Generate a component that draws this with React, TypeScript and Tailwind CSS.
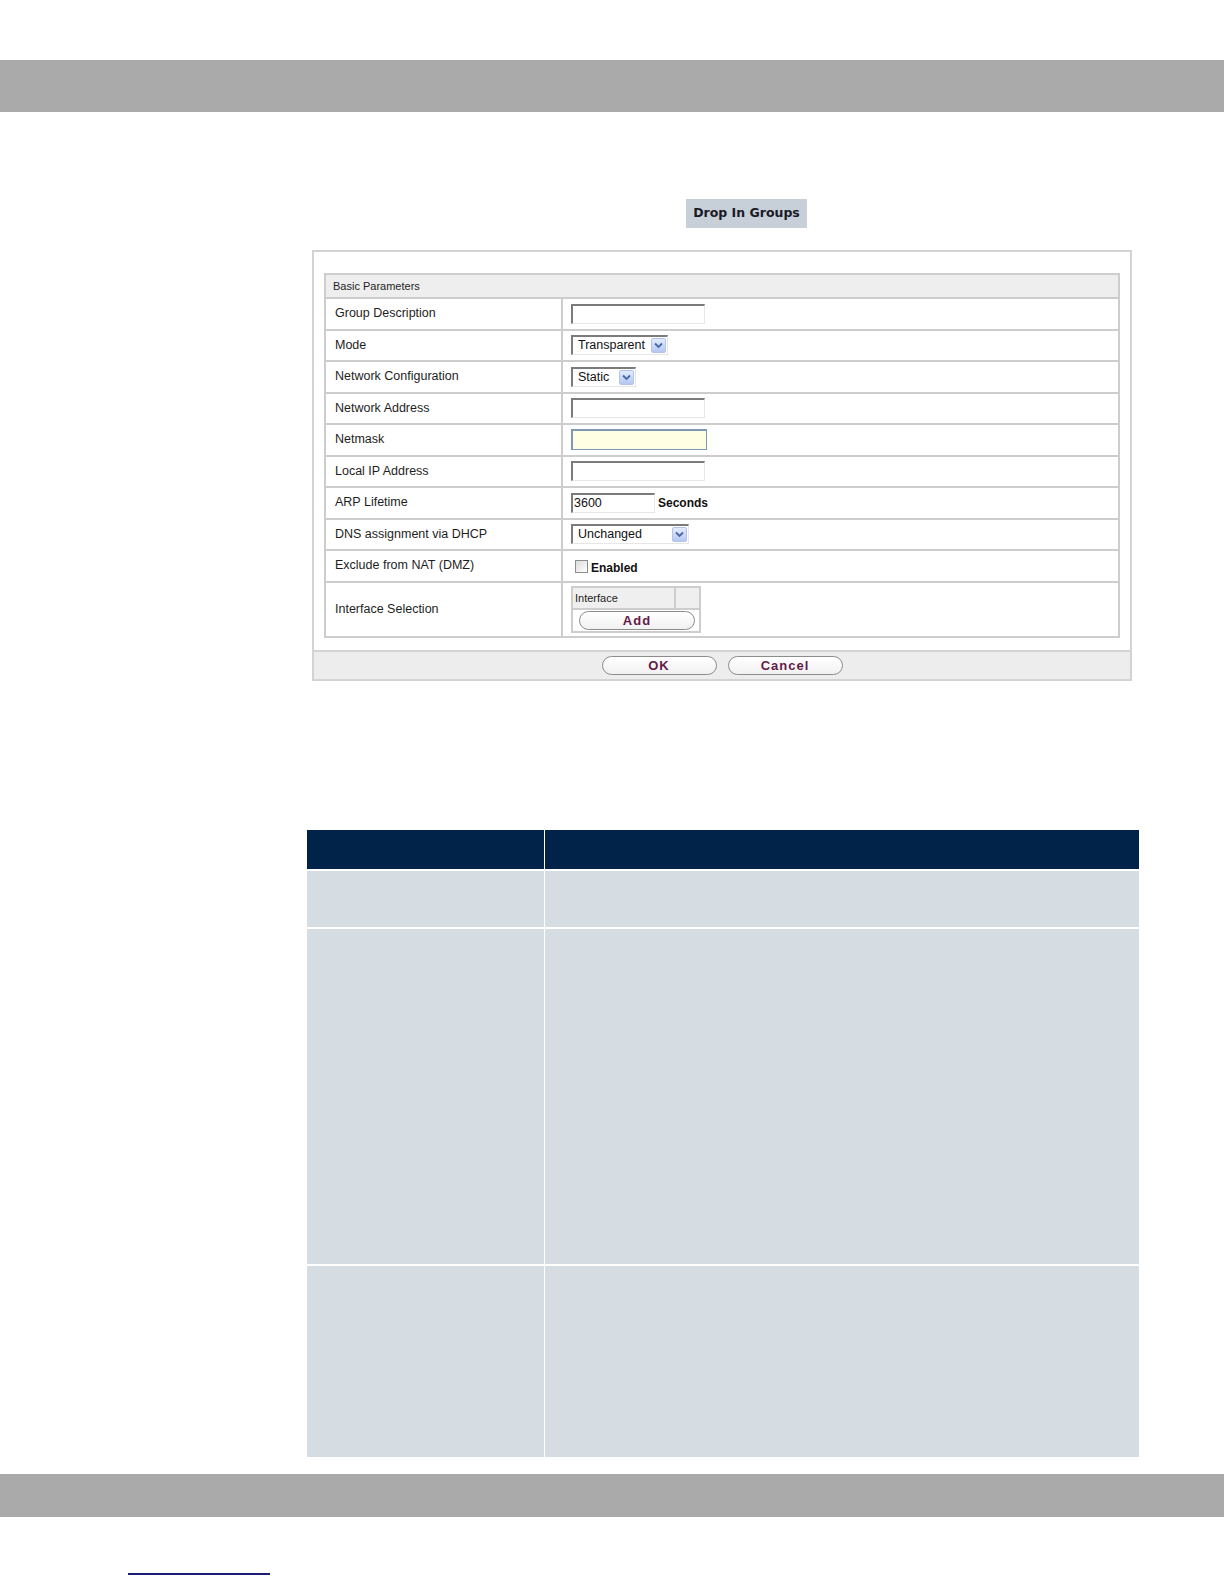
import React from 'react'

function Chevron() {
  return (
    <span className="flex h-[15px] w-[15px] items-center justify-center rounded-[2px] border border-[#b3c4ec] bg-linear-to-b from-[#e3ebfd] to-[#b6c8f2]">
      <svg width="9" height="7" viewBox="0 0 9 7">
        <path d="M1 1.5l3.5 3.5 3.5-3.5" fill="none" stroke="#4a66a6" strokeWidth="1.8" />
      </svg>
    </span>
  )
}

function Select({ value, className }: { value: string; className: string }) {
  return (
    <div
      className={`flex h-[20px] items-center justify-between border-t-2 border-l-2 border-r border-b border-t-[#7b7b7b] border-l-[#7b7b7b] border-r-[#e6e6e6] border-b-[#e6e6e6] bg-white pl-[5px] pr-[1px] text-[12.5px] text-[#111] ${className}`}
    >
      <span>{value}</span>
      <Chevron />
    </div>
  )
}

function TextInput({ className, value = '' }: { className: string; value?: string }) {
  return (
    <div
      className={`flex h-[20px] items-center border-t-2 border-l-2 border-r border-b border-t-[#7b7b7b] border-l-[#7b7b7b] border-r-[#e6e6e6] border-b-[#e6e6e6] bg-white pl-[1px] text-[12.5px] text-[#111] ${className}`}
    >
      {value}
    </div>
  )
}

function Row({
  label,
  children,
  className = 'h-[31.5px] border-b-2',
}: {
  label: string
  children?: React.ReactNode
  className?: string
}) {
  return (
    <div className={`flex border-[#cdcdcd] ${className}`}>
      <div className="flex w-[237px] shrink-0 items-center border-r-2 border-[#cdcdcd] pl-[9px] text-[12.5px] text-[#1e1e1e]">
        {label}
      </div>
      <div className="flex flex-1 items-center pl-[8px]">{children}</div>
    </div>
  )
}

function Pill({ label, className }: { label: string; className: string }) {
  return (
    <div
      className={`flex h-[19px] items-center justify-center rounded-full border border-[#8c8c8c] bg-linear-to-b from-white to-[#f1f1f1] text-[13px] font-bold tracking-[1px] text-[#641a48] ${className}`}
    >
      {label}
    </div>
  )
}

export default function App() {
  return (
    <div className="h-[1584px] w-[1224px] overflow-hidden bg-white font-['Liberation_Sans',Arial,sans-serif]">
      <div className="h-[60px]" />
      <div className="h-[52px] bg-[#aaaaaa]" />

      <div className="ml-[686px] mt-[87px] flex h-[29px] w-[121px] items-center justify-center bg-[#c7cfd8] font-['DejaVu_Sans',sans-serif] text-[12.5px] font-bold text-[#1b1b26]">
        Drop In Groups
      </div>

      <div className="ml-[312px] mt-[22px] flex h-[431px] w-[820px] flex-col border-2 border-[#d3d3d3]">
        <div className="mx-[10px] mt-[21px] flex h-[365px] flex-col border-2 border-[#cdcdcd]">
          <div className="flex h-[24px] shrink-0 items-center border-b-2 border-[#cdcdcd] bg-[#eeeeee] pl-[7px] text-[11px] text-[#1e1e1e]">
            Basic Parameters
          </div>
          <Row label="Group Description">
            <TextInput className="w-[134px]" />
          </Row>
          <Row label="Mode">
            <Select value="Transparent" className="w-[97px]" />
          </Row>
          <Row label="Network Configuration">
            <Select value="Static" className="w-[65px]" />
          </Row>
          <Row label="Network Address">
            <TextInput className="w-[134px]" />
          </Row>
          <Row label="Netmask">
            <div className="h-[21px] w-[136px] border border-t-2 border-l-2 border-[#7e98b6] bg-[#ffffe3]" />
          </Row>
          <Row label="Local IP Address">
            <TextInput className="w-[134px]" />
          </Row>
          <Row label="ARP Lifetime">
            <TextInput className="w-[84px]" value="3600" />
            <span className="ml-[3px] text-[12px] font-bold text-[#111]">Seconds</span>
          </Row>
          <Row label="DNS assignment via DHCP">
            <Select value="Unchanged" className="w-[118px]" />
          </Row>
          <Row label="Exclude from NAT (DMZ)">
            <div className="ml-[4px] flex items-center pt-[1px]">
              <span className="h-[13px] w-[13px] border border-[#8d8d8d] bg-linear-to-br from-[#dcdcdc] to-white" />
              <span className="ml-[3px] mt-[3px] text-[12px] font-bold text-[#111]">Enabled</span>
            </div>
          </Row>
          <Row label="Interface Selection" className="flex-1">
            <div className="flex h-[47px] w-[130px] flex-col border-2 border-[#cdcdcd]">
              <div className="flex h-[22px] shrink-0 border-b-2 border-[#cdcdcd] bg-[#efefef]">
                <div className="flex flex-1 items-center pl-[2px] text-[11px] text-[#1e1e1e]">Interface</div>
                <div className="w-[25px] border-l-2 border-[#cdcdcd]" />
              </div>
              <div className="flex flex-1 items-center justify-center pl-[2px]">
                <Pill label="Add" className="w-[116px]" />
              </div>
            </div>
          </Row>
        </div>

        <div className="mt-[12px] flex flex-1 items-center justify-center gap-[11px] border-t-2 border-[#d3d3d3] bg-[#ededed]">
          <Pill label="OK" className="w-[115px]" />
          <Pill label="Cancel" className="w-[115px]" />
        </div>
      </div>

      <div className="ml-[307px] mt-[149px] flex w-[832px] flex-col">
        <div className="flex h-[39px] bg-[#012249]">
          <div className="w-[237px]" />
          <div className="flex-1 border-l border-white" />
        </div>
        <div className="flex h-[58px] border-t-2 border-white bg-[#d6dde2]">
          <div className="w-[237px]" />
          <div className="flex-1 border-l border-white" />
        </div>
        <div className="flex h-[337px] border-t-2 border-white bg-[#d6dde2]">
          <div className="w-[237px]" />
          <div className="flex-1 border-l border-white" />
        </div>
        <div className="flex h-[193px] border-t-2 border-white bg-[#d6dde2]">
          <div className="w-[237px]" />
          <div className="flex-1 border-l border-white" />
        </div>
      </div>

      <div className="mt-[17px] h-[43px] bg-[#aaaaaa]" />

      <div className="ml-[128px] mt-[56px] h-[1.5px] w-[142px] bg-[#1c1c78]" />
    </div>
  )
}
